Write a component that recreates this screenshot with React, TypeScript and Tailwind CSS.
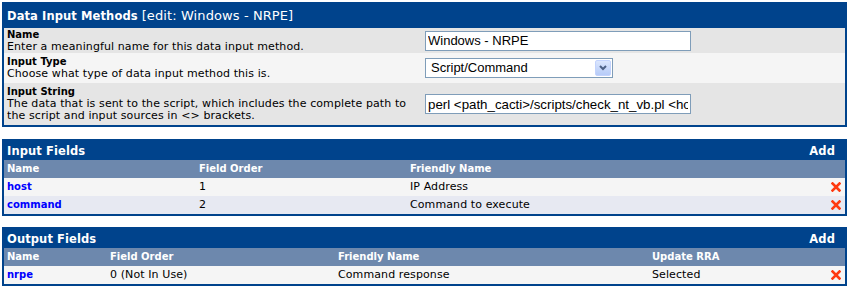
import React from "react";

const font = "font-['DejaVu_Sans',Verdana,sans-serif]";

function DeleteIcon() {
  return (
    <svg width="10" height="10" viewBox="0 0 10 10" className="block">
      <path d="M1.5 1.5 L8.5 8.5 M8.5 1.5 L1.5 8.5" stroke="#ff3a10" strokeWidth="2.6" strokeLinecap="square" />
    </svg>
  );
}

function BoxHeader({ title, add }: { title: React.ReactNode; add?: boolean }) {
  return (
    <div className="flex h-[19px] items-center justify-between bg-[#00438C] px-[3px] text-[11.5px] font-bold text-white">
      <div>{title}</div>
      {add && <div className="pr-[7px]">Add</div>}
    </div>
  );
}

export default function App() {
  const inputFields = [
    { name: "host", order: "1", friendly: "IP Address", bg: "bg-[#F5F5F5]" },
    { name: "command", order: "2", friendly: "Command to execute", bg: "bg-[#E7E9F2]" },
  ];

  return (
    <div className={`${font} w-[845px] ml-[2px] pt-[2px] text-[11px] leading-[12px] tracking-[0.1px] text-black`}>
      {/* Data input method form */}
      <div className="border-2 border-[#00438C]">
        <div className="flex h-[24px] items-center bg-[#00438C] px-[3px] text-white">
          <span className="text-[11.5px] font-bold">Data Input Methods</span>
          <span className="ml-[4px] text-[13px]">[edit: Windows - NRPE]</span>
        </div>

        <div className="flex h-[25px] items-center bg-[#E5E5E5] px-[3px]">
          <div className="w-[418px]">
            <div className="text-[10px] font-bold tracking-normal">Name</div>
            <div>Enter a meaningful name for this data input method.</div>
          </div>
          <input
            readOnly
            value="Windows - NRPE"
            className="h-[20px] w-[266px] border border-[#7F9DB9] bg-white px-[2px] font-['Liberation_Sans',Arial,sans-serif] text-[13px] tracking-normal outline-none"
          />
        </div>

        <div className="flex h-[30px] items-center bg-[#F5F5F5] px-[3px]">
          <div className="w-[418px]">
            <div className="text-[10px] font-bold tracking-normal">Input Type</div>
            <div>Choose what type of data input method this is.</div>
          </div>
          <div className="flex h-[20px] w-[188px] items-center justify-between border border-[#7F9DB9] bg-white pl-[5px] pr-[1px] font-['Liberation_Sans',Arial,sans-serif] text-[13px] tracking-normal">
            <span>Script/Command</span>
            <span className="flex h-[16px] w-[16px] items-center justify-center rounded-[2px] border border-[#c3d3fd] bg-gradient-to-b from-[#dbe6fd] to-[#b6cbf8]">
              <svg width="8" height="6" viewBox="0 0 8 6">
                <path d="M1 1 L4 4 L7 1" stroke="#4d6185" strokeWidth="2" fill="none" />
              </svg>
            </span>
          </div>
        </div>

        <div className="flex h-[42px] items-center bg-[#E5E5E5] px-[3px]">
          <div className="w-[418px]">
            <div className="max-w-[405px]">
              <div className="text-[10px] font-bold tracking-normal">Input String</div>
              <div>
                The data that is sent to the script, which includes the complete path to the script and input sources
                in &lt;&gt; brackets.
              </div>
            </div>
          </div>
          <input
            readOnly
            value="perl <path_cacti>/scripts/check_nt_vb.pl <host> <command>"
            className="h-[20px] w-[266px] border border-[#7F9DB9] bg-white px-[2px] font-['Liberation_Sans',Arial,sans-serif] text-[13.3px] tracking-normal outline-none"
          />
        </div>
      </div>

      {/* Input fields */}
      <div className="mt-[12px] border-2 border-[#00438C]">
        <BoxHeader title="Input Fields" add />
        <div className="flex h-[18px] items-center bg-[#6D88AD] px-[3px] text-[10px] font-bold tracking-normal text-white">
          <div className="w-[192px]">Name</div>
          <div className="w-[211px]">Field Order</div>
          <div>Friendly Name</div>
        </div>
        {inputFields.map((f) => (
          <div key={f.name} className={`flex h-[18px] items-center px-[3px] ${f.bg}`}>
            <div className="w-[192px] text-[10px] font-bold tracking-normal text-[#0000FF]">{f.name}</div>
            <div className="w-[211px]">{f.order}</div>
            <div className="flex-1">{f.friendly}</div>
            <div className="pr-[1px]">
              <DeleteIcon />
            </div>
          </div>
        ))}
      </div>

      {/* Output fields */}
      <div className="mt-[11px] border-2 border-[#00438C]">
        <BoxHeader title="Output Fields" add />
        <div className="flex h-[18px] items-center bg-[#6D88AD] px-[3px] text-[10px] font-bold tracking-normal text-white">
          <div className="w-[103px]">Name</div>
          <div className="w-[228px]">Field Order</div>
          <div className="w-[314px]">Friendly Name</div>
          <div>Update RRA</div>
        </div>
        <div className="flex h-[18px] items-center bg-[#F5F5F5] px-[3px]">
          <div className="w-[103px] text-[10px] font-bold tracking-normal text-[#0000FF]">nrpe</div>
          <div className="w-[228px]">0 (Not In Use)</div>
          <div className="w-[314px]">Command response</div>
          <div className="flex-1">Selected</div>
          <div className="pr-[1px]">
            <DeleteIcon />
          </div>
        </div>
      </div>
    </div>
  );
}
